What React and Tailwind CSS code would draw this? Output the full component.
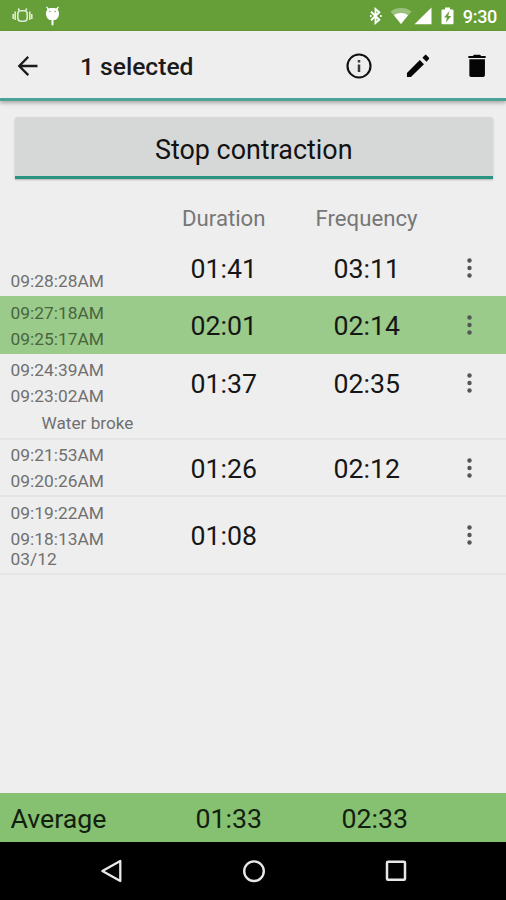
import React from "react";

const contractions = [
  { end: "", start: "09:28:28AM", duration: "01:41", frequency: "03:11", row: "h-[57px]", main: "h-[59px] pt-px", pad: "pt-[6px]" },
  { end: "09:27:18AM", start: "09:25:17AM", duration: "02:01", frequency: "02:14", row: "h-[58px] bg-[#9acb8a]", main: "h-[60px]", pad: "pt-[7px]", selected: true },
  { end: "09:24:39AM", start: "09:23:02AM", duration: "01:37", frequency: "02:35", note: "Water broke", row: "h-[86px] border-b-2 border-[#e4e4e4]", main: "h-[60px]", pad: "pt-[6px]" },
  { end: "09:21:53AM", start: "09:20:26AM", duration: "01:26", frequency: "02:12", row: "h-[57px] border-b-2 border-[#e4e4e4]", main: "h-[57px] pt-px", pad: "pt-[5px]" },
  { end: "09:19:22AM", start: "09:18:13AM", date: "03/12", duration: "01:08", frequency: "", row: "h-[78px] border-b-2 border-[#e4e4e4]", main: "h-[78px]", pad: "pt-[6px]" },
];

function StatusBar() {
  return (
    <header className="flex h-[31px] shrink-0 items-center bg-[#669f37] text-white">
      <svg className="ml-3 mt-px h-5 w-[21px]" viewBox="0 0 21 20" fill="none" stroke="#dcebd0" strokeWidth="1.6">
        <rect x="5.8" y="4.800" width="9.400" height="10.400" rx="3.200" />
        <path d="M7.500 4.800 6.200 2.500M13.500 4.800 14.800 2.500M3.200 5.500v8.500M17.800 5.500v8.500M1.200 8v5M19.800 8v5" />
      </svg>
      <svg className="ml-[12px] mt-px h-5 w-[15px]" viewBox="0 0 15 20" fill="#fff">
        <path d="M1.800.5 3.900 2.500C5.800 1.900 9.200 1.900 11.100 2.500L13.200.5l.7.6-1.300 2.400c1.100 1.600 1.700 3.500 1.300 5.500-.5 2.900-2.300 5-4.400 5H8.500v4.800c0 .8-2 .8-2 0V14H5.500c-2.100 0-3.900-2.100-4.400-5C.7 7 1.300 5.100 2.400 3.500L1.100 1.100z" />
        <circle cx="4.900" cy="5.500" r=".7" fill="#669f37" />
        <circle cx="10.100" cy="5.500" r=".7" fill="#669f37" />
      </svg>
      <div className="ml-auto flex items-center pr-[9px]">
        <svg className="h-[18px] w-[13px]" viewBox="0 0 13 18" fill="none" stroke="#fff" strokeWidth="1.900">
          <path d="m2 4.800 8.300 8L6.500 16V2l3.800 3.200-8.300 8" />
          <path d="M1 9h1.600M11 9h1.600" />
        </svg>
        <svg className="ml-[8px] h-[18px] w-[22px]" viewBox="0 0 22 18">
          <path d="M11 17 .5 4.500C6-.1 16-.1 21.500 4.500z" fill="#9ac17b" />
          <path d="M11 17 4 8.200c4-3 10-3 14 0z" fill="#fff" />
        </svg>
        <svg className="ml-[2px] h-[18px] w-[18px]" viewBox="0 0 18 18" fill="#fff">
          <path d="M.5 17.300 17.500.5v16.800z" />
        </svg>
        <svg className="ml-[9px] h-[18px] w-[13px]" viewBox="0 0 13 18">
          <path d="M1.500 2.500H4V.5h5v2h2.500q1 0 1 1v12.800q0 1-1 1h-10q-1 0-1-1V3.500q0-1 1-1z" fill="#fff" />
          <path d="M8.500 4 3 10.500h3l-1.200 5L10.300 9H7.200z" fill="#669f37" />
        </svg>
        <span className="ml-[9px] mt-[2px] text-[18px] font-medium leading-5 tracking-[-0.3px]">9:30</span>
      </div>
    </header>
  );
}

function Toolbar() {
  return (
    <div className="z-10 flex h-[70px] shrink-0 items-center border-b-[3px] border-[#4aa396] bg-[#eeeeee] shadow-[0_2px_4px_rgba(0,0,0,0.3)]">
      <svg className="ml-[11px] mt-[2px] h-[34px] w-[34px]" viewBox="0 0 24 24" fill="#1b1b1b">
        <path d="M18.700 11.100H7.800l4.900-4.900L11.600 5l-6.900 7 6.900 7 1.200-1.200-5-4.900h10.900z" />
      </svg>
      <h1 className="ml-[35px] mt-[4px] text-[24.600px] font-medium leading-8 text-[#1b1b1b]">1 selected</h1>
      <div className="ml-auto mt-[2px] flex items-center pr-[12px]">
        <svg className="h-[34px] w-[34px]" viewBox="0 0 34 34" fill="none" stroke="#111">
          <circle cx="17" cy="17" r="11.500" strokeWidth="2.100" />
          <path d="M17 15.500v7.500M17 11v2.500" strokeWidth="2.500" stroke="#3a3a3a" />
        </svg>
        <svg className="ml-[25px] h-[34px] w-[34px]" viewBox="0 0 24 24" fill="#050505">
          <path d="M4.200 17v2.800H7L16.200 10.700l-2.900-2.900zM19.600 7.200c.4-.4.400-.8 0-1.200l-1.600-1.600c-.4-.4-.8-.4-1.200 0l-1.700 1.700 2.900 2.900z" />
        </svg>
        <svg className="ml-[25px] h-[34px] w-[34px]" viewBox="0 0 24 24" fill="#050505">
          <path d="M6.600 18.600c0 .7.500 1.100 1.100 1.100h8.800c.7 0 1.100-.5 1.100-1.100V7.300h-11zM18.100 4.900h-3.100l-.9-.8H9.900l-.9.800H5.900v1.500h12.200z" />
        </svg>
      </div>
    </div>
  );
}

function Row({ item }) {
  const small = item.selected ? "text-[#49653f]" : "text-[#707070]";
  return (
    <li className={`flex shrink-0 ${item.row}`}>
      <div className={`w-[190.500px] shrink-0 pl-[10.500px] text-[17.350px] leading-5 ${item.pad} ${small}`}>
        <div className="h-5">{item.end}</div>
        <div className="mt-[6px] h-5">{item.start}</div>
        {item.date && <div>{item.date}</div>}
        {item.note && <div className="mt-[7px] pl-[31px] text-[17.200px]">{item.note}</div>}
      </div>
      <div className={`flex flex-1 items-center text-[26.700px] text-[#161616] ${item.main}`}>
        <span className="w-[143px]">{item.duration}</span>
        <span className="w-[133.500px]">{item.frequency}</span>
        <svg className="-mt-[3px] h-5 w-[5px]" viewBox="0 0 5 20" fill="#555">
          <circle cx="2.500" cy="2.500" r="2.200" />
          <circle cx="2.500" cy="10" r="2.200" />
          <circle cx="2.500" cy="17.500" r="2.200" />
        </svg>
      </div>
    </li>
  );
}

export default function App() {
  return (
    <div className="flex h-[900px] w-[506px] flex-col overflow-hidden bg-[#eeeeee] font-[Roboto,sans-serif]">
      <StatusBar />
      <Toolbar />
      <button className="ml-[14.500px] mr-[13px] mt-4 flex h-[62px] shrink-0 items-center justify-center rounded-t-[3px] border-b-[3px] border-[#2b9481] bg-[#d6d8d7] pt-[7px] text-[26.900px] text-[#121212] shadow-[0_1px_2px_rgba(0,0,0,0.25)]">
        Stop contraction
      </button>
      <div className="flex h-[60px] shrink-0 items-center pl-[182px] pt-[19px] text-[22.200px] text-[#777]">
        <span className="w-[133.500px]">Duration</span>
        <span>Frequency</span>
      </div>
      <ul className="flex flex-1 flex-col">
        {contractions.map((item) => (
          <Row key={item.start} item={item} />
        ))}
      </ul>
      <div className="flex h-[49px] shrink-0 items-center bg-[#86c172] pl-[10.500px] pt-[3px] text-[26.700px] text-[#13200f]">
        <span className="w-[185px]">Average</span>
        <span className="w-[146px]">01:33</span>
        <span>02:33</span>
      </div>
      <nav className="flex h-[58px] shrink-0 items-center bg-black pl-[100px]">
        <svg className="h-6 w-6" viewBox="0 0 24 24" fill="none" stroke="#e8e8e8" strokeWidth="2.300" strokeLinejoin="round">
          <path d="M20.300 2v20L2.400 12z" />
        </svg>
        <svg className="ml-[117.500px] h-6 w-6" viewBox="0 0 24 24" fill="none" stroke="#e8e8e8" strokeWidth="2.400">
          <circle cx="12" cy="12.200" r="9.800" />
        </svg>
        <svg className="ml-[118px] h-6 w-6" viewBox="0 0 24 24" fill="none" stroke="#e8e8e8" strokeWidth="2.500">
          <rect x="3" y="2.800" width="18" height="18" rx="1" />
        </svg>
      </nav>
    </div>
  );
}
